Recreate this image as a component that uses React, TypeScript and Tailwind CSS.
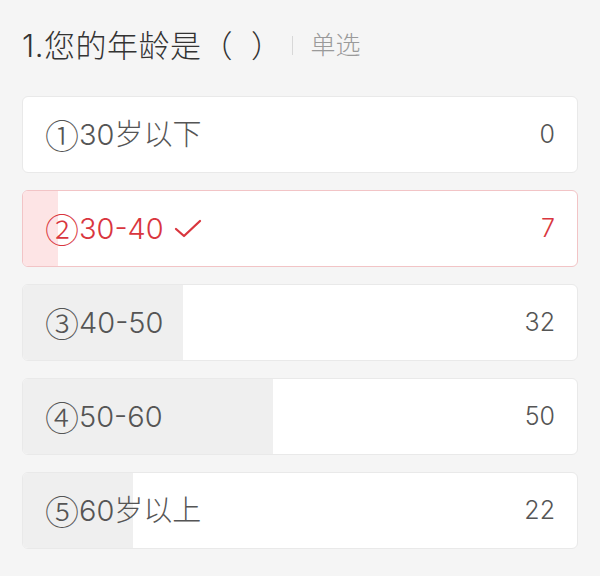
import React from "react";

type Option = {
  mark: string;
  label: string;
  count: number;
  picked?: boolean;
};

const options: Option[] = [
  { mark: "①", label: "30岁以下", count: 0 },
  { mark: "②", label: "30-40", count: 7, picked: true },
  { mark: "③", label: "40-50", count: 32 },
  { mark: "④", label: "50-60", count: 50 },
  { mark: "⑤", label: "60岁以上", count: 22 },
];

const total = options.reduce((sum, o) => sum + o.count, 0);

function Check() {
  return (
    <svg width="28" height="22" viewBox="0 0 28 22" fill="none" className="ml-[10px]">
      <path
        d="M2 11 L10 18 L26 3"
        stroke="#d9363e"
        strokeWidth="2.3"
        strokeLinecap="round"
        strokeLinejoin="round"
      />
    </svg>
  );
}

function OptionRow({ option }: { option: Option }) {
  const pct = total ? (option.count / total) * 100 : 0;
  return (
    <div
      className={`relative h-[77px] rounded-[6px] border bg-white overflow-hidden flex items-center justify-between px-[22px] ${
        option.picked ? "border-[#f2c4c6]" : "border-[#e9e9e9]"
      }`}
    >
      <div
        className={`absolute inset-y-0 left-0 ${option.picked ? "bg-[#fde4e5]" : "bg-[#efefef]"}`}
        style={{ width: `${pct}%` }}
      />
      <div
        className={`relative flex items-center text-[29px] font-light ${
          option.picked ? "text-[#d9363e]" : "text-[#555555]"
        }`}
      >
        <span className="font-['Noto_Sans_CJK_SC'] font-extralight text-[34px] leading-none">
          {option.mark}
        </span>
        <span>{option.label}</span>
        {option.picked && <Check />}
      </div>
      <span
        className={`relative text-[25px] font-light ${option.picked ? "text-[#d9363e]" : "text-[#555555]"}`}
      >
        {option.count}
      </span>
    </div>
  );
}

export default function App() {
  return (
    <div
      className="min-h-screen w-full bg-[#f5f5f5] px-[22px]"
      style={{ fontFamily: 'Inter, "Noto Sans CJK SC", "Noto Sans", sans-serif' }}
    >
      <div className="h-[96px] pb-[6px] flex items-center">
        <h1 className="flex items-center text-[31px] tracking-[0.5px] text-[#333333] font-light leading-none [text-spacing-trim:space-all]">
          <span>1.您的年龄是</span>
          <span>（</span>
          <span className="w-[18px]" />
          <span>）</span>
        </h1>
        <div className="w-px h-[19px] bg-[#d8d8d8] ml-[10px] mr-[17px]" />
        <span className="text-[25px] text-[#9a9a9a] font-light leading-none">单选</span>
      </div>
      <div className="flex flex-col gap-[17px]">
        {options.map((o) => (
          <OptionRow key={o.mark} option={o} />
        ))}
      </div>
    </div>
  );
}
